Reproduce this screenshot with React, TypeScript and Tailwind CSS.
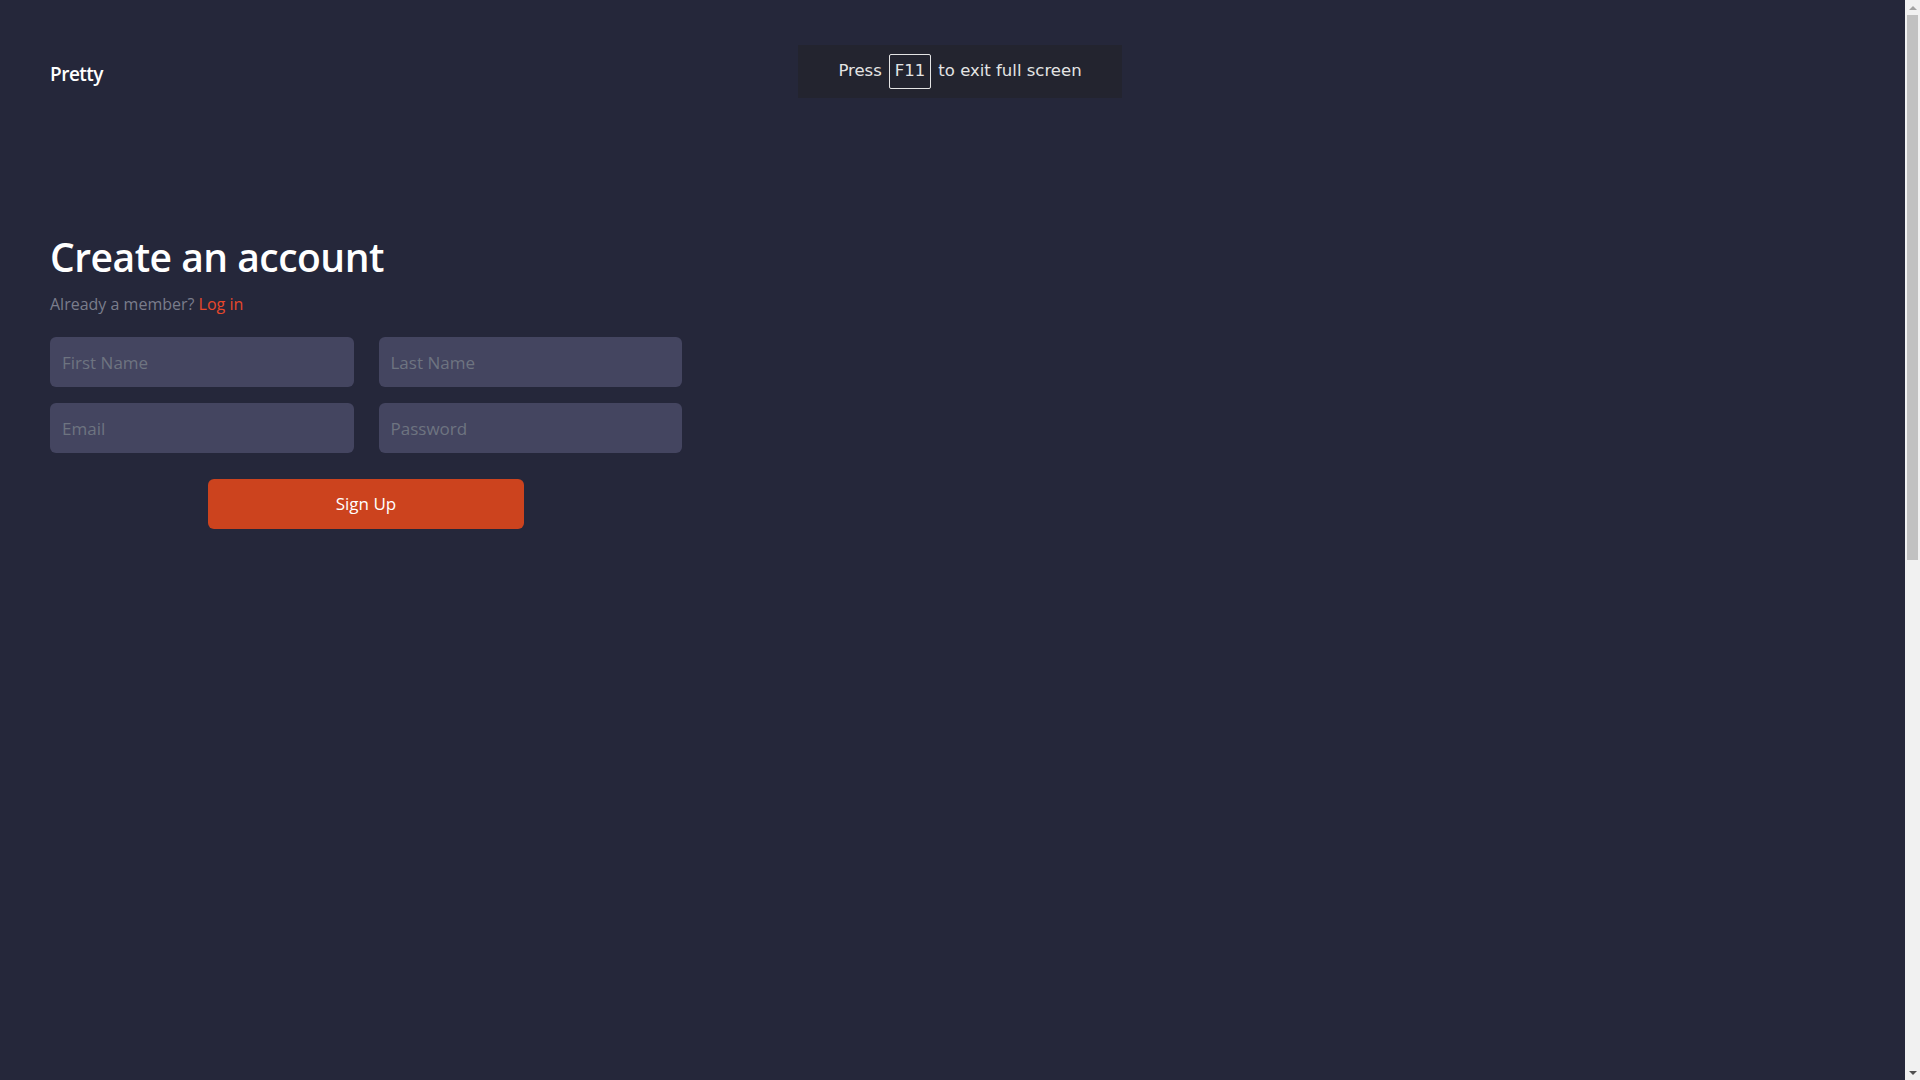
function Field({ placeholder, type = "text" }: { placeholder: string; type?: string }) {
  return <input
    type={type}
    placeholder={placeholder}
    className="h-[50px] w-full rounded-md bg-[#444560] px-3 text-[17px] text-white placeholder:text-[#6e7480] outline-none"
  />;
}

function App() {
  return <div className="min-h-screen bg-[#25273a] font-['Open_Sans',sans-serif] relative overflow-hidden h-screen">
    <header className="px-[50px] pt-[60px]">
      <span className="text-[19px] font-semibold tracking-[-0.5px] text-white">Pretty</span>
    </header>

    <main className="px-[50px] pt-[143px]">
      <div className="w-[632px]">
        <h1 className="text-[39px] font-semibold leading-[1.3] tracking-[-0.5px] text-white">Create an account</h1>
        <p className="mt-[10px] text-[16px] text-[#7a7d8c]">
          Already a member? <a href="#" className="text-[#e8472b]">Log in</a>
        </p>

        <form className="mt-[21px] flex flex-col gap-4" onSubmit={e => e.preventDefault()}>
          <div className="grid grid-cols-2 gap-x-[25px] gap-y-4">
            <Field placeholder="First Name"/>
            <Field placeholder="Last Name"/>
            <Field placeholder="Email" type="email"/>
            <Field placeholder="Password" type="password"/>
          </div>
          <div className="flex justify-center pt-[10px]">
            <button className="h-[50px] w-[316px] rounded-md bg-[#cc431e] text-[17px] text-white">Sign Up</button>
          </div>
        </form>
      </div>
    </main>

    <div className="absolute left-[798px] top-[45px] flex h-[53px] w-[324px] items-center justify-center gap-[7px] bg-[#23242f] font-['DejaVu_Sans',sans-serif] text-[16.5px] text-[#e4e4e4]">
      <span>Press</span>
      <span className="rounded-[2px] border border-[#e4e4e4] px-[5px] py-[8px] leading-none">F11</span>
      <span>to exit full screen</span>
    </div>

    <div className="absolute right-0 top-0 flex h-full w-[15px] flex-col items-center bg-[#f1f1f1]">
      <div className="flex h-[15px] items-center justify-center">
        <div className="h-0 w-0 border-x-[4px] border-b-[4px] border-x-transparent border-b-[#a3a3a3]"/>
      </div>
      <div className="h-[545px] w-[11px] bg-[#c1c1c1]"/>
      <div className="flex-1"/>
      <div className="flex h-[15px] items-center justify-center">
        <div className="h-0 w-0 border-x-[4px] border-t-[4px] border-x-transparent border-t-[#505050]"/>
      </div>
    </div>
  </div>;
}

export default App
